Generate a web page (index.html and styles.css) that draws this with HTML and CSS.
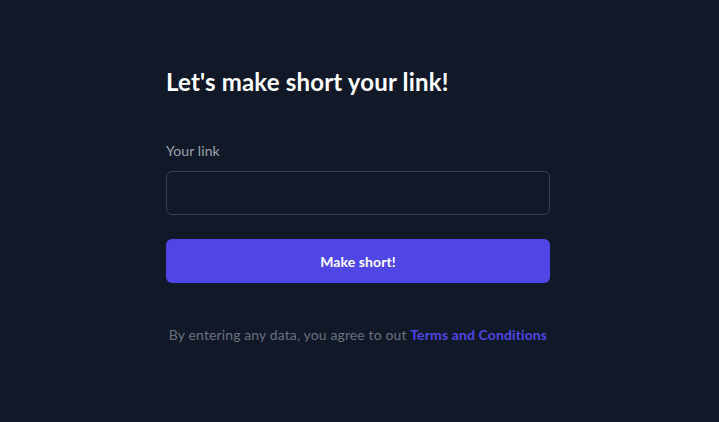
FILE: index.html
```html
<!DOCTYPE html>
<html lang="en">
<head>
<meta charset="utf-8">
<title>Shorten link</title>
<link rel="stylesheet" href="styles.css">
</head>
<body>
<main class="page">
  <div class="card">
    <h1 class="title">Let's make short your link!</h1>
    <form class="form">
      <label class="label" for="link">Your link</label>
      <input class="input" id="link" type="text">
      <button class="button" type="button">Make short!</button>
    </form>
    <p class="terms">By entering any data, you agree to out <a class="terms-link" href="#">Terms and Conditions</a></p>
  </div>
</main>
</body>
</html>
```
FILE: styles.css
```css
* { box-sizing: border-box; }
html, body { margin: 0; height: 100%; }
body {
  background: #111827;
  font-family: Lato, "Noto Sans", sans-serif;
}
.page {
  display: flex;
  justify-content: center;
  padding-top: 66px;
  padding-right: 3px;
}
.card {
  width: 384px;
  display: flex;
  flex-direction: column;
}
.title {
  margin: 0;
  color: #ffffff;
  font-size: 24px;
  line-height: 32px;
  font-weight: 700;
  letter-spacing: 0.18px;
}
.form {
  display: flex;
  flex-direction: column;
  margin-top: 43px;
}
.label {
  color: #9ca3af;
  font-size: 14px;
  line-height: 20px;
  letter-spacing: 0.1px;
}
.input {
  margin-top: 10px;
  height: 44px;
  background: transparent;
  border: 1px solid #374151;
  border-radius: 6px;
  color: #fff;
  padding: 0 12px;
  font: inherit;
}
.button {
  margin-top: 24px;
  height: 44px;
  background: #4f46e5;
  border: 0;
  border-radius: 6px;
  color: #fff;
  font: inherit;
  font-size: 14px;
  font-weight: 700;
  letter-spacing: 0.1px;
}
.terms {
  margin: 42px 0 0;
  text-align: center;
  color: #6b7280;
  font-size: 14px;
  line-height: 20px;
  white-space: nowrap;
  letter-spacing: 0.12px;
}
.terms-link {
  color: #4f46e5;
  font-weight: 700;
  text-decoration: none;
}
```
